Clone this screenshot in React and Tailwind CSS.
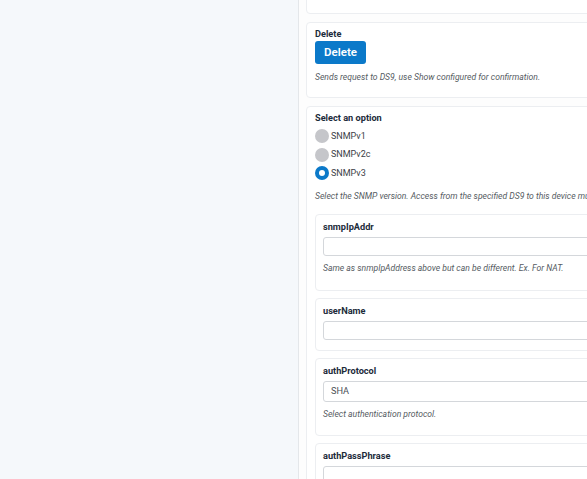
import { useState } from 'react';

const Card = ({ className = '', children }) => (
  <div className={`w-[330px] shrink-0 rounded-[4px] border border-[#eceef1] bg-white ${className}`}>
    {children}
  </div>
);

const Label = ({ children }) => (
  <div className="text-[9.2px] font-bold leading-[12px] text-[#1c2b3a]">{children}</div>
);

const Help = ({ children, className = '' }) => (
  <p className={`text-[8.6px] italic leading-[11px] text-[#555b62] whitespace-nowrap ${className}`}>{children}</p>
);

const Field = ({ label, help, value, className = '', boxClass = 'h-[19px]' }) => (
  <Card className={`px-[7px] pt-[6px] ${className}`}>
    <Label>{label}</Label>
    <div className={`mt-[4px] flex w-[300px] items-center rounded-[3px] border border-[#d4d7db] bg-white px-[7px] text-[9.2px] text-[#4a4f55] ${boxClass}`}>
      {value}
    </div>
    {help && <Help className="mt-[7px]">{help}</Help>}
  </Card>
);

export default function App() {
  const [version, setVersion] = useState('SNMPv3');

  return (
    <div className="flex h-[479px] w-[587px] overflow-hidden bg-white font-['Roboto','Liberation_Sans',sans-serif]">
      {/* panel izquierdo vacío */}
      <div className="w-[299px] shrink-0 border-r border-[#e4e7ea] bg-[#f5f8fb]" />

      <div className="flex min-w-0 flex-1 flex-col gap-[8px] bg-[#fdfdfd] pl-[7px]">
        <Card className="-mt-[16px] h-[30px]" />

        {/* Delete */}
        <Card className="h-[76px] px-[8px] pt-[5px]">
          <Label>Delete</Label>
          <button className="mt-[1px] flex h-[23px] w-[51px] items-center justify-center rounded-[3px] bg-[#0b79c9] text-[11.5px] font-semibold text-white">
            Delete
          </button>
          <Help className="mt-[8px]">Sends request to DS9, use Show configured for confirmation.</Help>
        </Card>

        {/* Select an option */}
        <Card className="px-[8px] pt-[5px]">
          <Label>Select an option</Label>
          <div className="mt-[3px] flex flex-col">
            {['SNMPv1', 'SNMPv2c', 'SNMPv3'].map((v) => (
              <label key={v} className="flex h-[18.5px] items-center gap-[2px]" onClick={() => setVersion(v)}>
                {version === v ? (
                  <span className="flex h-[14px] w-[14px] items-center justify-center rounded-full bg-[#0b79c9]">
                    <span className="h-[6px] w-[6px] rounded-full bg-white" />
                  </span>
                ) : (
                  <span className="h-[14px] w-[14px] rounded-full bg-[#c5c6ca]" />
                )}
                <span className="text-[9px] text-[#3c4147]">{v}</span>
              </label>
            ))}
          </div>
          <Help className="mt-[8px]">
            Select the SNMP version. Access from the specified DS9 to this device must be allowed.
          </Help>

          <div className="mt-[12px] flex flex-col gap-[7px]">
            <Field
              className="h-[77px]"
              label="snmpIpAddr"
              help="Same as snmpIpAddress above but can be different. Ex. For NAT."
            />
            <Field className="h-[53px]" label="userName" />
            <Field
              className="h-[78px]"
              boxClass="h-[21px]"
              label="authProtocol"
              value="SHA"
              help="Select authentication protocol."
            />
            <Field className="h-[60px]" label="authPassPhrase" />
          </div>
        </Card>
      </div>
    </div>
  );
}
